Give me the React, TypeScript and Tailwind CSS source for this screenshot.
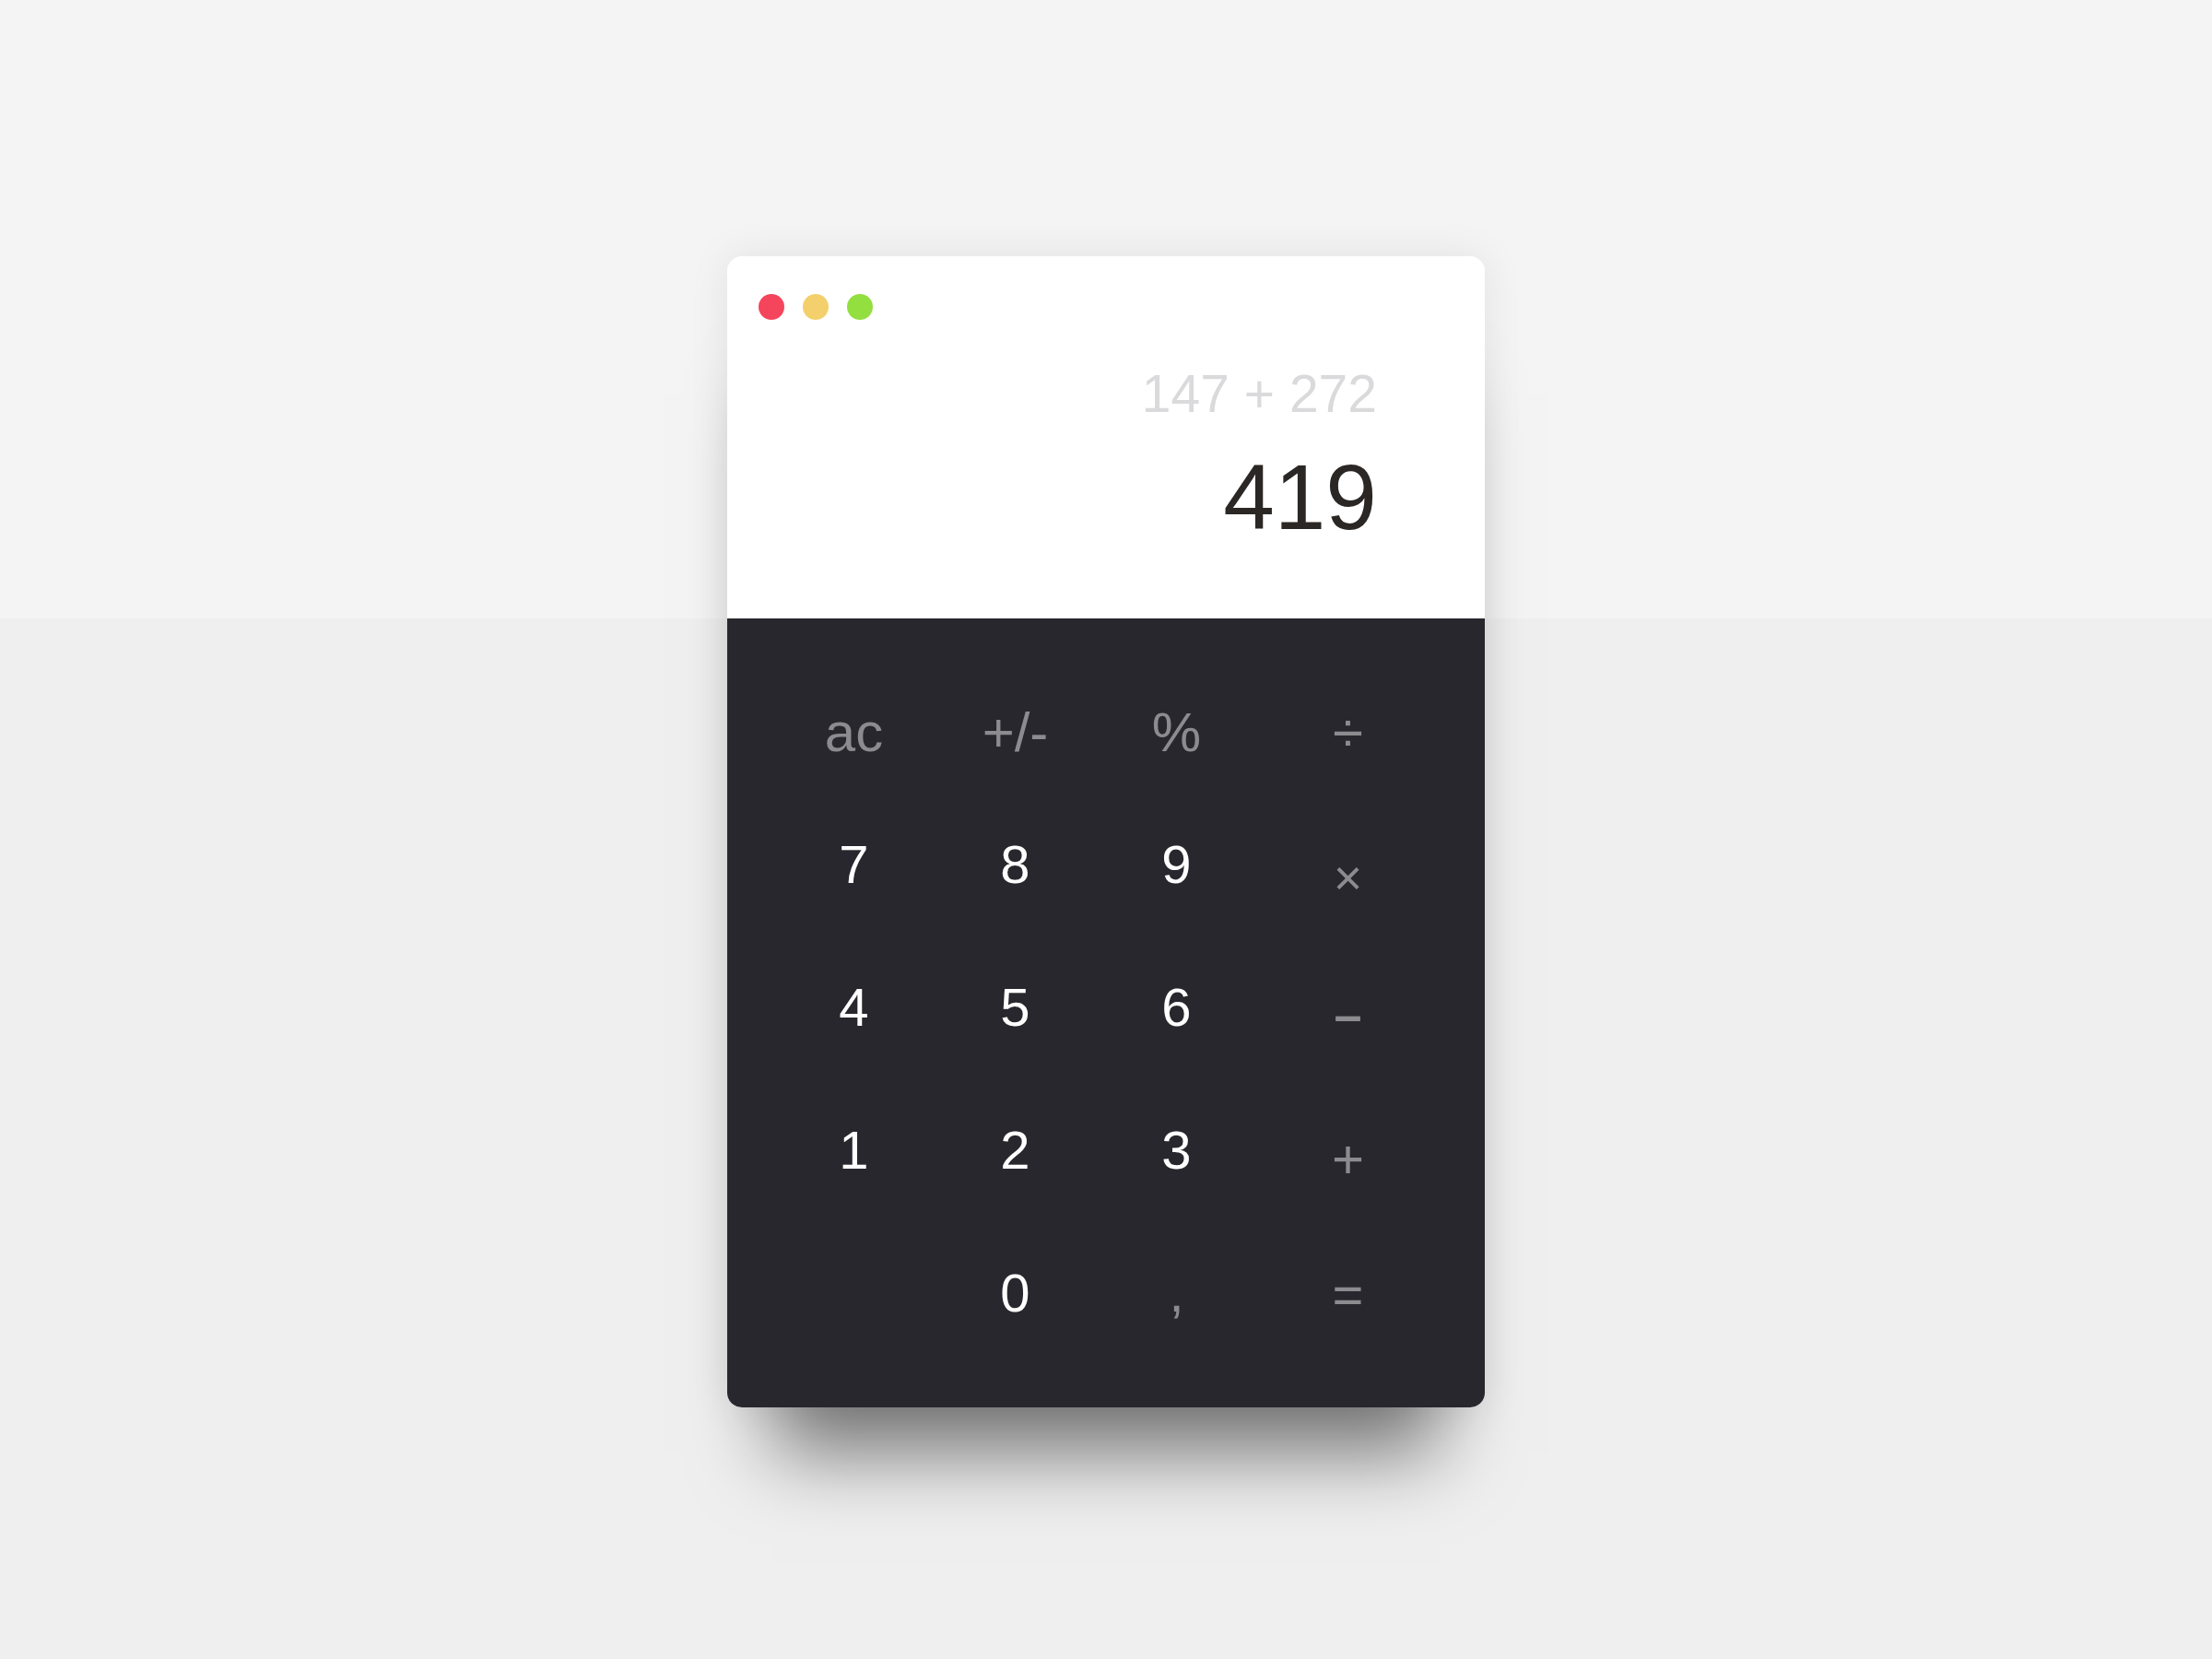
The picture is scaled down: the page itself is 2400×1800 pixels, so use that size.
import React from 'react';

type Key = { label: string; kind: 'fn' | 'num' | 'op'; cls?: string };

const rows: Key[][] = [
  [
    { label: 'ac', kind: 'fn' },
    { label: '+/-', kind: 'fn' },
    { label: '%', kind: 'fn' },
    { label: '÷', kind: 'op', cls: 'text-[60px]' },
  ],
  [
    { label: '7', kind: 'num' },
    { label: '8', kind: 'num' },
    { label: '9', kind: 'num' },
    { label: '×', kind: 'op', cls: 'text-[54px] translate-y-[14px]' },
  ],
  [
    { label: '4', kind: 'num' },
    { label: '5', kind: 'num' },
    { label: '6', kind: 'num' },
    { label: '–', kind: 'op', cls: 'text-[54px] font-bold translate-y-[8px]' },
  ],
  [
    { label: '1', kind: 'num' },
    { label: '2', kind: 'num' },
    { label: '3', kind: 'num' },
    { label: '+', kind: 'op', cls: 'text-[60px] translate-y-[10px]' },
  ],
  [
    { label: '', kind: 'num' },
    { label: '0', kind: 'num' },
    { label: ',', kind: 'op', cls: 'text-[58px]' },
    { label: '=', kind: 'op', cls: 'text-[58px] translate-y-[2px]' },
  ],
];

function KeyCell({ k }: { k: Key }) {
  const color = k.kind === 'num' ? 'text-white text-[58px]' : 'text-[#8b8b90]';
  const size = k.kind === 'fn' ? 'text-[60px]' : '';
  return (
    <div className="flex items-center justify-center">
      <span className={`leading-none ${color} ${size} ${k.cls ?? ''}`}>{k.label}</span>
    </div>
  );
}

export default function App() {
  return (
    <div className="w-full h-screen flex justify-center pt-[278px] bg-[linear-gradient(to_bottom,#f4f4f4_671px,#efefef_671px)] font-['Liberation_Sans',Arial,sans-serif]">
      <div className="w-[822px] h-[1249px] flex flex-col rounded-[16px] overflow-hidden shadow-[0_100px_80px_-50px_rgba(0,0,0,0.5),0_0_45px_rgba(0,0,0,0.08)]">
        {/* display */}
        <div className="h-[393px] bg-white flex flex-col pt-[41px] pl-[34px] pr-[117px]">
          <div className="flex gap-[20px]">
            <span className="w-[28px] h-[28px] rounded-full bg-[#f5455c]" />
            <span className="w-[28px] h-[28px] rounded-full bg-[#f3d06b]" />
            <span className="w-[28px] h-[28px] rounded-full bg-[#92df3f]" />
          </div>
          <div className="mt-[52px] text-right text-[57px] leading-none text-[#dadadc]">147 + 272</div>
          <div className="mt-[33px] text-right text-[100px] leading-none text-[#2a2725]">419</div>
        </div>

        {/* keypad */}
        <div className="flex-1 bg-[#28272d] px-[50px] pt-[59px]">
          {rows.map((row, i) => (
            <div
              key={i}
              className={`grid grid-cols-[175px_175px_175px_1fr] ${i === 0 ? 'h-[130px]' : 'h-[155px]'}`}
            >
              {row.map((k, j) => (
                <KeyCell key={j} k={k} />
              ))}
            </div>
          ))}
        </div>
      </div>
    </div>
  );
}
